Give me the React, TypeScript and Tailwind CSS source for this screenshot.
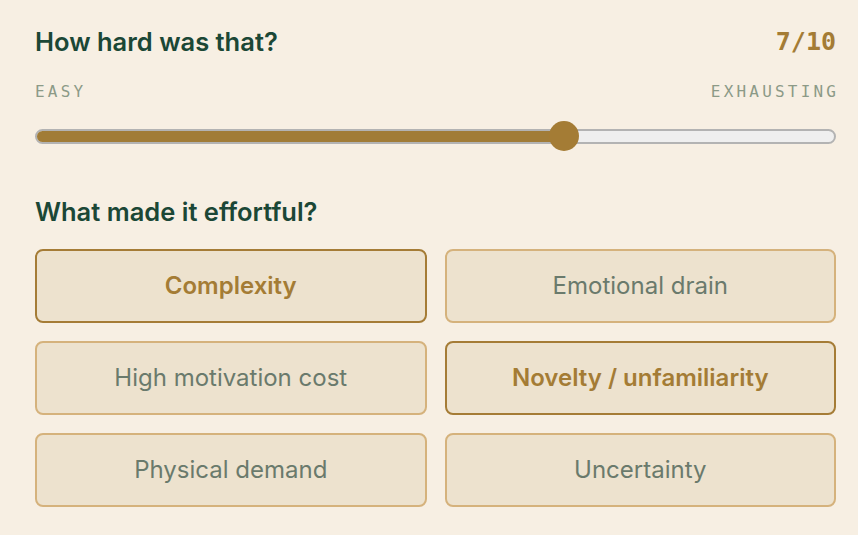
import { useState } from "react";

const opciones = [
  "Complexity",
  "Emotional drain",
  "High motivation cost",
  "Novelty / unfamiliarity",
  "Physical demand",
  "Uncertainty",
];

const sans = { fontFamily: "Inter, 'Noto Sans', sans-serif" };
const mono = { fontFamily: "'DejaVu Sans Mono', 'Liberation Mono', monospace" };

export default function App() {
  const [valor] = useState(7);
  const [seleccion, setSeleccion] = useState<string[]>(["Complexity", "Novelty / unfamiliarity"]);

  const toggle = (o: string) =>
    setSeleccion((s) => (s.includes(o) ? s.filter((x) => x !== o) : [...s, o]));

  // el thumb queda en 66% del track
  const pos = 66;

  return (
    <div className="w-[858px] h-[535px] bg-[#f7efe3] pl-[35px] pr-[22px] pt-[26px]" style={sans}>
      <div className="flex items-center justify-between h-[32px]">
        <h2 className="text-[25.5px] font-semibold text-[#1b4736]">How hard was that?</h2>
        <span className="text-[25px] font-bold text-[#a47c35]" style={mono}>
          {valor}/10
        </span>
      </div>

      <div className="flex justify-between mt-[24px] text-[16px] leading-[20px] tracking-[0.2em] text-[#8c9a87]" style={mono}>
        <span>EASY</span>
        <span className="-mr-[0.2em]">EXHAUSTING</span>
      </div>

      {/* Slider */}
      <div className="relative mt-[19px] h-[30px] flex items-center">
        <div className="w-full h-[15px] rounded-full bg-[#efefef] border-2 border-[#b3b3b3] overflow-hidden">
          <div className="h-full bg-[#a17c37]" style={{ width: `${pos}%` }} />
        </div>
        <div
          className="absolute top-0 w-[30px] h-[30px] rounded-full bg-[#a47c35] -translate-x-1/2"
          style={{ left: `${pos}%` }}
        />
      </div>

      <h3 className="mt-[45px] text-[25.5px] font-semibold text-[#1b4736] leading-[32px]">
        What made it effortful?
      </h3>

      <div className="grid grid-cols-2 gap-[18px] mt-[21px]">
        {opciones.map((o) => {
          const activo = seleccion.includes(o);
          return (
            <button
              key={o}
              onClick={() => toggle(o)}
              className={
                activo
                  ? "h-[74px] rounded-[8px] bg-[#ede2ce] border-2 border-[#a57c36] text-[24px] font-semibold text-[#a47c35]"
                  : "h-[74px] rounded-[8px] bg-[#ede2ce] border-2 border-[#d5b27c] text-[24px] font-normal text-[#6a7a6c]"
              }
            >
              {o}
            </button>
          );
        })}
      </div>
    </div>
  );
}
